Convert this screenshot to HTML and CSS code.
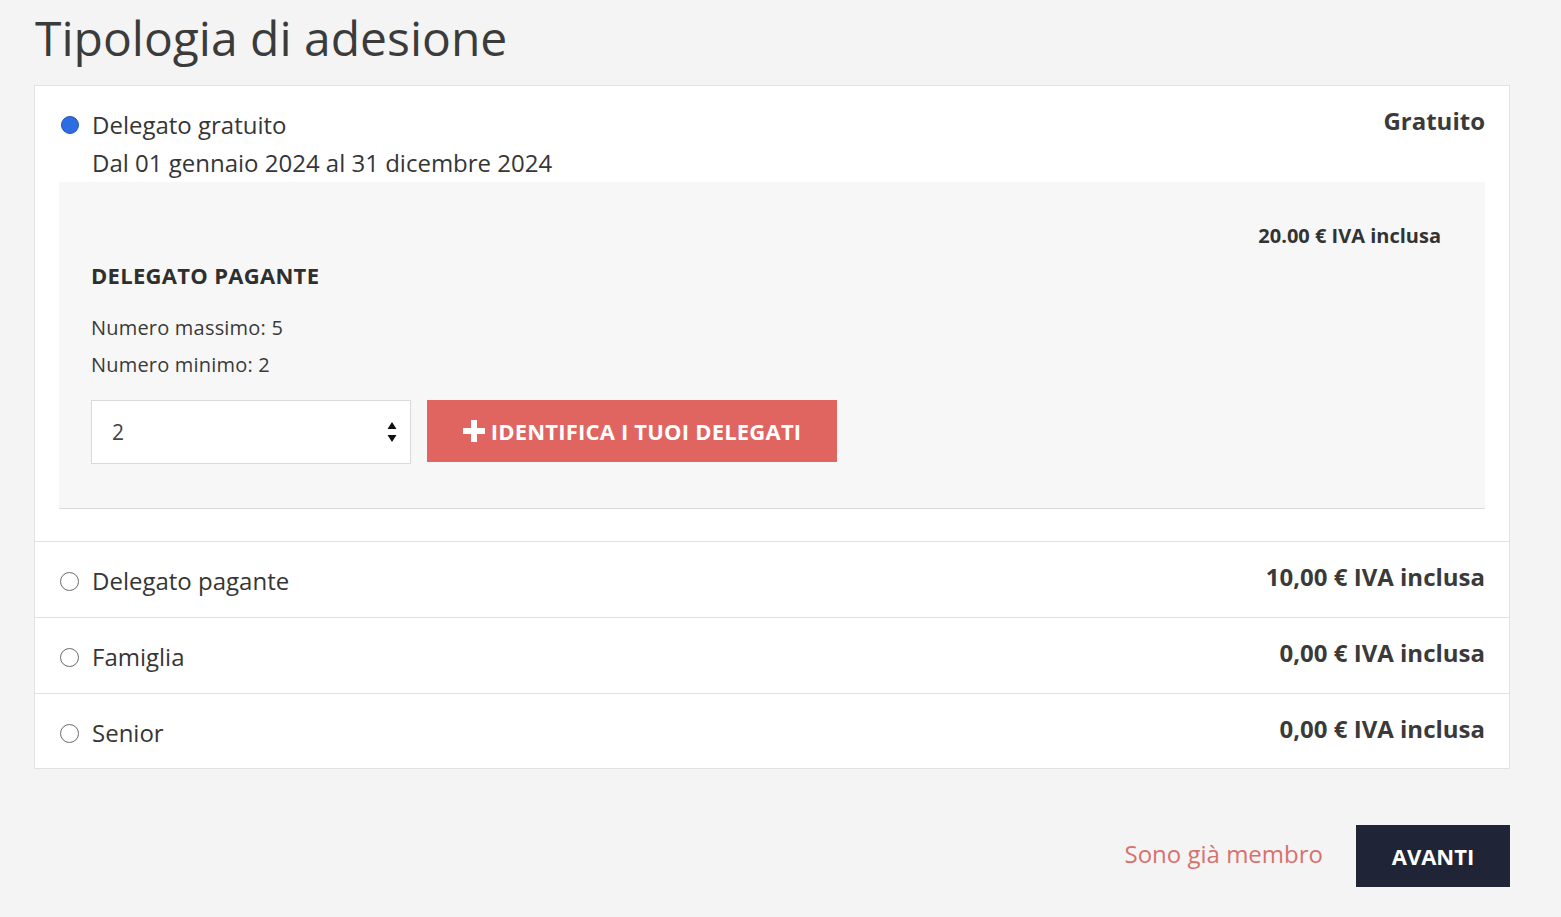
FILE: index.html
```html
<!DOCTYPE html>
<html lang="it">
<head>
<meta charset="utf-8">
<title>Tipologia di adesione</title>
<link rel="stylesheet" href="styles.css">
</head>
<body>
<main class="page">
  <h1 class="title">Tipologia di adesione</h1>
  <section class="card">
    <div class="option option-open">
      <div class="option-head">
        <span class="radio radio-on"></span>
        <div class="option-text">
          <div class="label">Delegato gratuito</div>
          <div class="label">Dal 01 gennaio 2024 al 31 dicembre 2024</div>
        </div>
        <div class="price">Gratuito</div>
      </div>
      <div class="panel">
        <div class="panel-price">20.00 € IVA inclusa</div>
        <div class="panel-title">DELEGATO PAGANTE</div>
        <p class="panel-info first">Numero massimo: 5</p>
        <p class="panel-info">Numero minimo: 2</p>
        <div class="panel-actions">
          <div class="select">
            <span class="select-value">2</span>
            <svg class="select-arrows" width="10" height="22" viewBox="0 0 10 22"><path d="M5 1 L9.5 8 H0.5 Z M5 21 L9.5 14 H0.5 Z" fill="#111"/></svg>
          </div>
          <button class="btn-red" type="button">
            <svg class="plus" width="22" height="22" viewBox="0 0 22 22"><path d="M8 0 H14 V8 H22 V14 H14 V22 H8 V14 H0 V8 H8 Z" fill="#fff"/></svg>
            <span>IDENTIFICA I TUOI DELEGATI</span>
          </button>
        </div>
      </div>
    </div>
    <div class="option">
      <div class="option-head">
        <span class="radio"></span>
        <div class="option-text"><div class="label">Delegato pagante</div></div>
        <div class="price">10,00 € IVA inclusa</div>
      </div>
    </div>
    <div class="option">
      <div class="option-head">
        <span class="radio"></span>
        <div class="option-text"><div class="label">Famiglia</div></div>
        <div class="price">0,00 € IVA inclusa</div>
      </div>
    </div>
    <div class="option">
      <div class="option-head">
        <span class="radio"></span>
        <div class="option-text"><div class="label">Senior</div></div>
        <div class="price">0,00 € IVA inclusa</div>
      </div>
    </div>
  </section>
  <footer class="footer">
    <a class="link" href="#">Sono già membro</a>
    <button class="btn-dark" type="button">AVANTI</button>
  </footer>
</main>
</body>
</html>
```

FILE: styles.css
```css
* { box-sizing: border-box; }
html, body { margin: 0; padding: 0; }
body {
  background: #f4f4f4;
  font-family: "Open Sans", "Liberation Sans", sans-serif;
  color: #333;
}
.page {
  padding: 10px 51px 30px 34px;
}
.title {
  margin: 0 0 19px 1px;
  font-size: 48px;
  font-weight: 400;
  line-height: 56px;
  color: #3b3b3b;
}
.card {
  background: #fff;
  border: 1px solid #e1e1e1;
}
.option {
  padding: 20px 24px 17px;
  border-top: 1px solid #e1e1e1;
}
.option:first-child { border-top: none; }
.option:last-child { padding-bottom: 16px; }
.option-open { padding-bottom: 32px; }
.option-head {
  display: flex;
  align-items: flex-start;
}
.radio {
  flex: none;
  width: 19px;
  height: 19px;
  margin: 10px 13px 0 1px;
  border-radius: 50%;
  border: 1.5px solid #6b6b6b;
  background: #fff;
}
.radio-on {
  width: 18px;
  height: 18px;
  margin: 10px 13px 0 2px;
  background: #2e6ce4;
  border: 1.5px solid #2553b0;
}
.option-text { flex: 1; }
.label {
  font-size: 24px;
  line-height: 38px;
  color: #363636;
}
.price {
  font-size: 24px;
  font-weight: 700;
  line-height: 30px;
  color: #3a3a3a;
}
.panel {
  background: #f7f7f7;
  border-bottom: 1px solid #d9d9d9;
  padding: 32px 44px 44px 32px;
  display: flex;
  flex-direction: column;
}
.panel-price {
  align-self: flex-end;
  font-size: 20px;
  font-weight: 700;
  line-height: 44px;
  color: #333;
}
.panel-title {
  font-size: 22px;
  font-weight: 700;
  line-height: 34px;
  letter-spacing: 0.3px;
  color: #2f2f2f;
}
.panel-info {
  margin: 0;
  font-size: 20px;
  line-height: 28px;
  letter-spacing: 0.2px;
  color: #3a3a3a;
}
.panel-info.first { margin-top: 22px; margin-bottom: 9px; }
.panel-actions {
  display: flex;
  gap: 16px;
  margin-top: 21px;
  align-items: flex-start;
}
.select {
  width: 320px;
  height: 64px;
  background: #fff;
  border: 1px solid #d9d9d9;
  display: flex;
  align-items: center;
  justify-content: space-between;
  padding: 0 13px 0 20px;
}
.select-value {
  font-size: 21px;
  color: #444;
}
.btn-red {
  width: 410px;
  height: 62px;
  border: none;
  background: #e06561;
  color: #fff;
  font-family: "Open Sans", "Liberation Sans", sans-serif;
  font-size: 22px;
  font-weight: 700;
  display: flex;
  align-items: center;
  justify-content: center;
  gap: 6px;
  padding: 0;
  letter-spacing: 0.2px;
}
.footer {
  display: flex;
  justify-content: flex-end;
  align-items: center;
  gap: 33px;
  margin-top: 56px;
}
.link {
  font-size: 24px;
  color: #d8716c;
  text-decoration: none;
  margin-bottom: 6px;
}
.btn-dark {
  width: 154px;
  height: 62px;
  border: none;
  background: #1f2436;
  color: #fff;
  font-family: "Open Sans", "Liberation Sans", sans-serif;
  font-size: 22px;
  font-weight: 700;
  padding: 0;
}
```
